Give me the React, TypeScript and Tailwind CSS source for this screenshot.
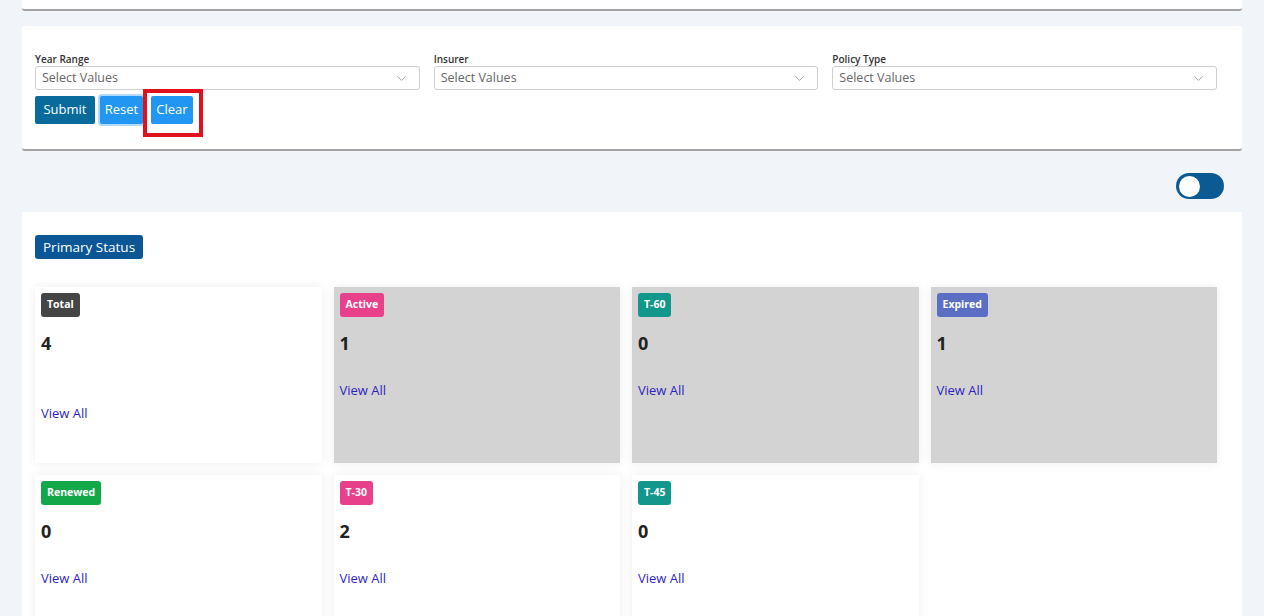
import { ChevronDown } from 'lucide-react'

type Stat = {
  label: string
  count: number
  badge: string
  gray?: boolean
  tall?: boolean
}

const stats: Stat[] = [
  { label: 'Total', count: 4, badge: 'bg-[#454545]', tall: true },
  { label: 'Active', count: 1, badge: 'bg-[#e9408c]', gray: true },
  { label: 'T-60', count: 0, badge: 'bg-[#13978c]', gray: true },
  { label: 'Expired', count: 1, badge: 'bg-[#5a6fc4]', gray: true },
  { label: 'Renewed', count: 0, badge: 'bg-[#12a84a]' },
  { label: 'T-30', count: 2, badge: 'bg-[#e9408c]' },
  { label: 'T-45', count: 0, badge: 'bg-[#13978c]' },
]

const filters = ['Year Range', 'Insurer', 'Policy Type']

function SelectBox({ label }: { label: string }) {
  return (
    <div className="flex flex-col">
      <label className="text-[10px] font-semibold leading-[13px] text-[#333]">{label}</label>
      <div className="flex h-[24px] items-center justify-between rounded-[3px] border border-[#cfcfcf] bg-white pl-[6px] pr-[10px]">
        <span className="text-[12.5px] text-[#666]">Select Values</span>
        <ChevronDown className="h-[15px] w-[15px] text-[#888]" strokeWidth={1.2} />
      </div>
    </div>
  )
}

function StatCard({ stat }: { stat: Stat }) {
  return (
    <div
      className={`flex h-[176px] flex-col items-start p-[6px] shadow-[0_0_10px_rgba(0,0,0,0.07)] ${stat.gray ? 'bg-[#d3d3d3]' : 'bg-white'}`}
    >
      <span
        className={`flex h-[24px] items-center rounded-[3px] px-[6px] text-[10.5px] font-bold text-white ${stat.badge}`}
      >
        {stat.label}
      </span>
      <div className="mt-[13px] text-[18px] font-bold leading-[27px] text-[#222]">{stat.count}</div>
      <div className={`${stat.tall ? 'mt-[47px]' : 'mt-[24px]'} text-[13px] leading-[18px]`}>
        <a href="#" className="text-[#2f1fc2]">View All</a>
      </div>
    </div>
  )
}

export default function App() {
  return (
    <div className="min-h-screen bg-[#f1f4f8] px-[22px] font-['Open_Sans',sans-serif]">
      <div className="h-[11px] rounded-b-[3px] border-b-2 border-[#a3a3a3] bg-white" />

      <div className="mt-[15px] rounded-[3px] border-b-2 border-[#a3a3a3] bg-white px-[13px] pb-[25px] pt-[27px]">
        <div className="grid grid-cols-3 gap-[14px] pr-[12px]">
          {filters.map((f) => (
            <SelectBox key={f} label={f} />
          ))}
        </div>
        <div className="mt-[6px] flex items-center">
          <button className="h-[28px] w-[60px] rounded-[2px] bg-[#086b9b] text-[13px] text-white">Submit</button>
          <button className="ml-[5px] h-[28px] w-[43px] rounded-[2px] bg-[#2196f3] text-[13px] text-white shadow-[0_0_0_2px_rgba(33,150,243,0.35)]">
            Reset
          </button>
          <div className="relative ml-[8px]">
            <button className="h-[28px] w-[42px] rounded-[2px] bg-[#2196f3] text-[13px] text-white">Clear</button>
            <div className="pointer-events-none absolute -bottom-[13px] -left-[8px] -right-[10px] -top-[7px] border-[4px] border-[#e0101c]" />
          </div>
        </div>
      </div>

      <div className="flex justify-end pb-[13px] pr-[18px] pt-[22px]">
        <div className="flex h-[26px] w-[48px] items-center rounded-full bg-[#0b5a93] px-[3px]">
          <div className="h-[21px] w-[21px] rounded-full bg-white" />
        </div>
      </div>

      <div className="bg-white px-[13px] pt-[23px]">
        <div className="flex">
          <span className="flex h-[24px] items-center rounded-[3px] bg-[#0b5694] px-[8px] text-[13.5px] text-white">
            Primary Status
          </span>
        </div>
        <div className="mt-[28px] grid grid-cols-4 gap-x-[12px] gap-y-[12px] pr-[12px]">
          {stats.map((s) => (
            <StatCard key={s.label} stat={s} />
          ))}
        </div>
      </div>
    </div>
  )
}
